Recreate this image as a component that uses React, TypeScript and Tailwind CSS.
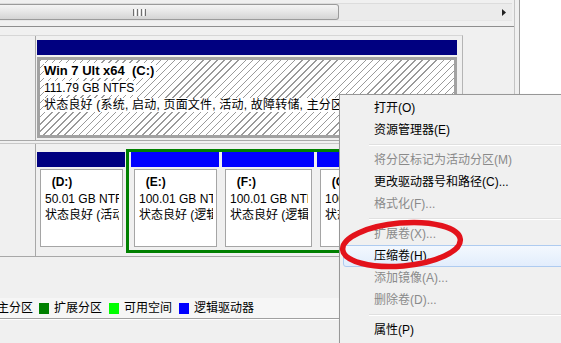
import React from 'react';

type PartProps = {
  width: string;
  bar: string;
  name: string;
  size: string;
  status: string;
};

const Part: React.FC<PartProps> = ({ width, bar, name, size, status }) => (
  <div className={`flex flex-col shrink-0 ${width}`}>
    <div className={`h-[15px] ${bar}`} />
    <div className="mt-[2px] mb-[3px] ml-[3px] mr-[2px] flex-1 border border-[#a5a5a5] bg-white pl-[4px] pr-[3px] pt-[4px] text-[12px] leading-[16.5px] text-black">
      <div className="overflow-hidden whitespace-nowrap">
        <div className="whitespace-pre font-bold">{'  (' + name + ')'}</div>
        <div>{size}</div>
        <div>{status}</div>
      </div>
    </div>
  </div>
);

const menuItems: { label: string; disabled?: boolean; active?: boolean; sep?: boolean }[] = [
  { label: '打开(O)' },
  { label: '资源管理器(E)' },
  { label: '', sep: true },
  { label: '将分区标记为活动分区(M)', disabled: true },
  { label: '更改驱动器号和路径(C)...' },
  { label: '格式化(F)...', disabled: true },
  { label: '', sep: true },
  { label: '扩展卷(X)...', disabled: true },
  { label: '压缩卷(H)...', active: true },
  { label: '添加镜像(A)...', disabled: true },
  { label: '删除卷(D)...', disabled: true },
  { label: '', sep: true },
  { label: '属性(P)' },
];

const ContextMenu: React.FC = () => (
  <div className="absolute left-[339px] top-[94px] w-[240px] h-[270px] border border-[#979797] bg-[#f0f0f0] p-[2px] shadow-[2px_2px_3px_rgba(0,0,0,0.25)]">
    {menuItems.map((item, idx) =>
      item.sep ? (
        <div key={idx} className="flex h-[8px] items-center pl-[27px]">
          <div className="h-[2px] w-full border-t border-b border-t-[#e0e0e0] border-b-white" />
        </div>
      ) : item.active ? (
        <div
          key={idx}
          className="ml-[1px] flex h-[22px] items-center rounded-[3px] border border-[#aecbf0] bg-gradient-to-b from-[#f3f8fe] to-[#e2edfc] pl-[30px] text-[12px] text-black"
        >
          {item.label}
        </div>
      ) : (
        <div
          key={idx}
          className={`flex h-[22px] items-center pl-[32px] text-[12px] ${item.disabled ? 'text-[#8a8a8a]' : 'text-black'}`}
        >
          {item.label}
        </div>
      )
    )}
  </div>
);

const App: React.FC = () => {
  return (
    <div className="relative h-[343px] w-[561px] overflow-hidden bg-[#f0f0f0] font-['Liberation_Sans','Noto_Sans_CJK_SC',sans-serif] text-black">
      <div className="flex h-full">
        {/* Main graphical view */}
        <div className="flex w-[514px] shrink-0 flex-col">
          {/* Horizontal scrollbar */}
          <div className="h-[27px] shrink-0 border-b border-[#8e8e8e] pt-[3px]">
            <div className="flex h-[18px] w-[512px] border-t border-b border-t-[#dcdcdc] border-b-[#e6e6e6] bg-[#ebebeb]">
              <div className="flex h-full w-[339px] items-center rounded-r-[3px] border border-l-0 border-[#9b9b9b] bg-gradient-to-b from-[#f5f5f5] via-[#e6e6e6] to-[#d4d4d4] pl-[133px]">
                <div className="flex h-[7px] gap-[1px]">
                  <div className="w-[1px] bg-[#6f6f6f]" />
                  <div className="w-[1px] bg-white" />
                  <div className="w-[1px] bg-[#6f6f6f]" />
                  <div className="w-[1px] bg-white" />
                  <div className="w-[1px] bg-[#6f6f6f]" />
                  <div className="w-[1px] bg-white" />
                  <div className="w-[1px] bg-[#6f6f6f]" />
                </div>
              </div>
              <div className="flex-1" />
              <div className="flex w-[17px] items-center justify-center">
                <svg width="4" height="7" viewBox="0 0 4 7">
                  <path d="M0 0 L4 3.5 L0 7 Z" fill="#222" />
                </svg>
              </div>
            </div>
          </div>

          {/* Disk 0 row */}
          <div className="mt-[8px] flex h-[106px] w-[463px] shrink-0 border-t border-b border-r border-t-[#d6d6d6] border-b-[#a8a8a8] border-r-[#b4b4b4]">
            <div className="w-[36px] shrink-0 border-r border-[#a8a8a8]" />
            <div className="flex flex-1 flex-col pl-[1px] pt-[4px] pb-[2px]">
              <div className="h-[15px] w-[420px] bg-[#000080]" />
              <div className="mt-[2px] flex-1 w-[420px] overflow-hidden whitespace-nowrap border-[3px] border-[#a2a2a2] bg-[repeating-linear-gradient(135deg,#9a9a9a_0_1px,#ffffff_1px_5px)] pl-[4px] pt-[2px] text-[12px] leading-[17px]">
                <div>
                  <span className="whitespace-pre bg-white pr-[2px] text-[13px] font-bold">{'Win 7 Ult x64  (C:)'}</span>
                </div>
                <div>
                  <span className="bg-white pr-[2px]">111.79 GB NTFS</span>
                </div>
                <div>
                  <span className="bg-white pr-[2px] tracking-[0.2px]">状态良好 (系统, 启动, 页面文件, 活动, 故障转储, 主分区)</span>
                </div>
              </div>
            </div>
          </div>

          {/* Disk 1 row */}
          <div className="mt-[2px] flex h-[114px] w-[463px] shrink-0 border-t border-b border-r border-t-[#c8c8c8] border-b-[#a8a8a8] border-r-[#b4b4b4]">
            <div className="w-[36px] shrink-0 border-r border-[#a8a8a8]" />
            <div className="flex flex-1 overflow-hidden pl-[1px] pt-[5px] pb-[3px]">
              <div className="mr-[1px] flex w-[88px] shrink-0 flex-col py-[3px]">
                <Part width="w-[88px] flex-1" bar="bg-[#000080]" name="D:" size="50.01 GB NTFS" status="状态良好 (活动, 主分区)" />
              </div>
              <div className="flex shrink-0 gap-[3px] border-[3px] border-[#008000] pl-[2px]">
                <Part width="w-[88px]" bar="bg-[#0000ff]" name="E:" size="100.01 GB NTFS" status="状态良好 (逻辑驱动器)" />
                <Part width="w-[92px]" bar="bg-[#0000ff]" name="F:" size="100.01 GB NTFS" status="状态良好 (逻辑驱动器)" />
                <Part width="w-[90px]" bar="bg-[#0000ff]" name="G:" size="100.01 GB NTFS" status="状态良好 (逻辑驱动器)" />
              </div>
            </div>
          </div>

          <div className="h-[41px] shrink-0" />

          {/* Legend */}
          <div className="flex h-[21px] shrink-0 items-center whitespace-nowrap border-b border-[#a0a0a0] bg-[#f6f6f6] text-[12px]">
            <span className="-ml-[3px]">主分区</span>
            <span className="ml-[6px] h-[11px] w-[10px] bg-[#008000]" />
            <span className="ml-[5px]">扩展分区</span>
            <span className="ml-[7px] h-[11px] w-[10px] bg-[#00ff00]" />
            <span className="ml-[5px]">可用空间</span>
            <span className="ml-[7px] h-[11px] w-[10px] bg-[#0000ff]" />
            <span className="ml-[5px]">逻辑驱动器</span>
          </div>
          <div className="h-[1px] shrink-0 bg-white" />
          <div className="flex-1 bg-[#f0f0f0]" />
        </div>

        {/* Right edge */}
        <div className="w-[6px] shrink-0 border-l border-r border-l-[#c4c4c4] border-r-[#a0a0a0] bg-[#f0f0f0]" />
        <div className="flex-1 bg-white" />
      </div>

      <ContextMenu />

      {/* Red hand-drawn ellipse */}
      <svg className="pointer-events-none absolute left-0 top-0" width="561" height="343" viewBox="0 0 561 343">
        <ellipse cx="401.5" cy="244.5" rx="59" ry="21.5" transform="rotate(-5 401.5 244.5)" fill="none" stroke="#e3121b" strokeWidth="5.5" />
      </svg>
    </div>
  );
};

export default App;
